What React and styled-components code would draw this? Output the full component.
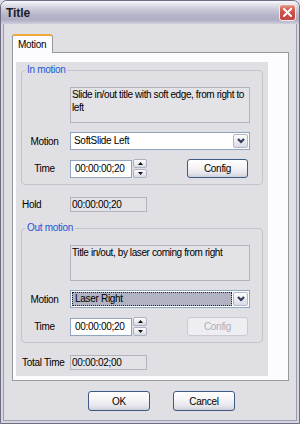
import React from "react";
import styled, { createGlobalStyle } from "styled-components";

const GlobalStyle = createGlobalStyle`
  html, body {
    margin: 0;
    padding: 0;
    background: #e0dfe3;
  }
  body {
    font-family: "Liberation Sans", Arial, sans-serif;
    font-size: 10px;
    letter-spacing: -0.3px;
    color: #000;
  }
`;

const Window = styled.div`
  width: 300px;
  height: 424px;
  box-sizing: border-box;
  border: 1px solid #6d6d84;
  border-radius: 7px 7px 0 0;
  background: #d6d6e0;
  display: flex;
  flex-direction: column;
  overflow: hidden;
`;

const TitleBar = styled.div`
  height: 23px;
  flex: none;
  display: flex;
  align-items: center;
  justify-content: space-between;
  padding: 0 3px 0 5px;
  background: linear-gradient(
    #fbfbfd 0%,
    #e6e6ee 12%,
    #c9c9d8 38%,
    #b5b4c8 62%,
    #afaec3 82%,
    #cfcfdc 100%
  );
`;

const TitleText = styled.span`
  font-size: 12px;
  font-weight: bold;
  letter-spacing: -0.1px;
  color: #1b1b2a;
`;

const CloseButton = styled.div`
  width: 17px;
  height: 17px;
  box-sizing: border-box;
  border: 1px solid #f4ecec;
  border-radius: 3px;
  background: linear-gradient(#eba28e 0%, #d5665a 25%, #c84c47 60%, #c24744 100%);
  display: flex;
  align-items: center;
  justify-content: center;
`;

const Body = styled.div`
  flex: 1;
  margin: 0 2px 2px;
  border: 1px solid #9d9db2;
  border-top: none;
  background: #e0dfe3;
  padding: 10px 7px 0 8px;
  display: flex;
  flex-direction: column;
`;

const TabStrip = styled.div`
  display: flex;
`;

const Tab = styled.div`
  width: 41px;
  height: 19px;
  box-sizing: border-box;
  border: 1px solid #919b9c;
  border-top: 2px solid #f2a73a;
  border-bottom: none;
  border-radius: 3px 3px 0 0;
  background: #fcfcfe;
  margin-bottom: -1px;
  position: relative;
  z-index: 1;
  padding-left: 5px;
  line-height: 17px;
`;

const TabPanel = styled.div`
  height: 329px;
  box-sizing: border-box;
  border: 1px solid #919b9c;
  background: #fcfcfe;
  padding: 9px 20px 4px 3px;
  display: flex;
`;

const Page = styled.div`
  flex: 1;
  background: #e0dfe3;
  padding: 2px 5px 0;
  display: flex;
  flex-direction: column;
`;

const Group = styled.fieldset`
  margin: ${(p) => (p.$first ? "0" : "10px 0 0")};
  width: 242px;
  box-sizing: border-box;
  border: 1px solid #c4c3cb;
  border-radius: 4px;
  padding: 11px 12px 6px 0;
  display: grid;
  grid-template-columns: 48px 1fr;
  grid-template-rows: 36px 18px 19px;
  row-gap: 9px;
  align-items: center;
`;

const Legend = styled.legend`
  margin-left: 3px;
  padding: 0 2px;
  line-height: 12px;
  color: #1f55d6;
`;

const Label = styled.div`
  text-align: center;
  padding-right: 3px;
`;

const Description = styled.div`
  grid-column: 2;
  align-self: stretch;
  box-sizing: border-box;
  border: 1px solid #b4b3ba;
  background: #e3e2e6;
  padding: 0 0 0 1px;
  line-height: 13px;
  letter-spacing: -0.4px;
`;

const Combo = styled.div`
  grid-column: 2;
  height: 18px;
  box-sizing: border-box;
  border: 1px solid #8fa4bf;
  background: #fff;
  display: flex;
  padding: 1px;
`;

const ComboText = styled.div`
  flex: 1;
  box-sizing: border-box;
  padding-left: 2px;
  line-height: ${(p) => (p.$focused ? "12px" : "14px")};
  background: ${(p) => (p.$focused ? "#b2b3c2" : "transparent")};
  border: ${(p) => (p.$focused ? "1px dotted #222" : "none")};
  margin-right: 1px;
`;

const DropButton = styled.div`
  width: 15px;
  box-sizing: border-box;
  border: 1px solid #b3b6c6;
  border-radius: 2px;
  background: linear-gradient(#fdfdfe, #d9dae4);
  display: flex;
  align-items: center;
  justify-content: center;
`;

const TimeControls = styled.div`
  grid-column: 2;
  display: flex;
  align-items: center;
  justify-content: space-between;
  padding-right: 2px;
`;

const Spin = styled.div`
  display: flex;
  align-items: center;
`;

const TimeInput = styled.div`
  width: 62px;
  height: 18px;
  box-sizing: border-box;
  border: 1px solid #8fa4bf;
  background: #fff;
  padding-left: 4px;
  line-height: 16px;
`;

const SpinButtons = styled.div`
  display: flex;
  flex-direction: column;
  gap: 1px;
  margin-left: 1px;
`;

const SpinButton = styled.div`
  width: 14px;
  height: 9px;
  box-sizing: border-box;
  border: 1px solid #aeb1c2;
  border-radius: 2px;
  background: linear-gradient(#fdfdfe, #d8d9e3);
  display: flex;
  align-items: center;
  justify-content: center;
`;

const Button = styled.div`
  width: ${(p) => p.$width || 62}px;
  height: ${(p) => p.$height || 20}px;
  box-sizing: border-box;
  border: 1px solid ${(p) => (p.$disabled ? "#cbcad2" : "#3e5a84")};
  border-radius: 3px;
  background: ${(p) =>
    p.$disabled
      ? "#eeedf1"
      : "linear-gradient(#ffffff 0%, #f4f4f6 45%, #e3e3ea 80%, #cfcfda 100%)"};
  color: ${(p) => (p.$disabled ? "#aeadb8" : "#000")};
  display: flex;
  align-items: center;
  justify-content: center;
`;

const FieldRow = styled.div`
  margin-top: 12px;
  display: grid;
  grid-template-columns: 48px 77px;
  align-items: center;
  padding-left: 1px;
  white-space: nowrap;
`;

const ReadOnlyField = styled.div`
  height: 15px;
  box-sizing: border-box;
  border: 1px solid #b4b3ba;
  background: #e3e2e6;
  padding-left: 1px;
  line-height: 13px;
`;

const ButtonRow = styled.div`
  margin-top: 10px;
  padding-left: 76px;
  display: flex;
  gap: 23px;
`;

const Chevron = () => (
  <svg width="8" height="6" viewBox="0 0 8 6">
    <polyline points="1,1 4,4 7,1" fill="none" stroke="#2f3b58" strokeWidth="2.2" />
  </svg>
);

const Arrow = ({ up }) => (
  <svg width="5" height="3" viewBox="0 0 5 3">
    <polygon points={up ? "0,3 2.5,0 5,3" : "0,0 2.5,3 5,0"} fill="#111" />
  </svg>
);

const MotionGroup = ({ title, description, motion, focused, configDisabled, first }) => (
  <Group $first={first}>
    <Legend>{title}</Legend>
    <Description>{description}</Description>
    <Label>Motion</Label>
    <Combo>
      <ComboText $focused={focused}>{motion}</ComboText>
      <DropButton>
        <Chevron />
      </DropButton>
    </Combo>
    <Label>Time</Label>
    <TimeControls>
      <Spin>
        <TimeInput>00:00:00;20</TimeInput>
        <SpinButtons>
          <SpinButton>
            <Arrow up />
          </SpinButton>
          <SpinButton>
            <Arrow />
          </SpinButton>
        </SpinButtons>
      </Spin>
      <Button $width={61} $height={19} $disabled={configDisabled}>
        Config
      </Button>
    </TimeControls>
  </Group>
);

export default function App() {
  return (
    <>
      <GlobalStyle />
      <Window>
        <TitleBar>
          <TitleText>Title</TitleText>
          <CloseButton>
            <svg width="9" height="9" viewBox="0 0 9 9">
              <path d="M1 1 L8 8 M8 1 L1 8" stroke="#fff" strokeWidth="2" strokeLinecap="square" />
            </svg>
          </CloseButton>
        </TitleBar>
        <Body>
          <TabStrip>
            <Tab>Motion</Tab>
          </TabStrip>
          <TabPanel>
            <Page>
              <MotionGroup
                first
                title="In motion"
                description="Slide in/out title with soft edge, from right to left"
                motion="SoftSlide Left"
              />
              <FieldRow>
                <span>Hold</span>
                <ReadOnlyField>00:00:00;20</ReadOnlyField>
              </FieldRow>
              <MotionGroup
                title="Out motion"
                description="Title in/out, by laser coming from right"
                motion="Laser Right"
                focused
                configDisabled
              />
              <FieldRow>
                <span>Total Time</span>
                <ReadOnlyField>00:00:02;00</ReadOnlyField>
              </FieldRow>
            </Page>
          </TabPanel>
          <ButtonRow>
            <Button>OK</Button>
            <Button>Cancel</Button>
          </ButtonRow>
        </Body>
      </Window>
    </>
  );
}
